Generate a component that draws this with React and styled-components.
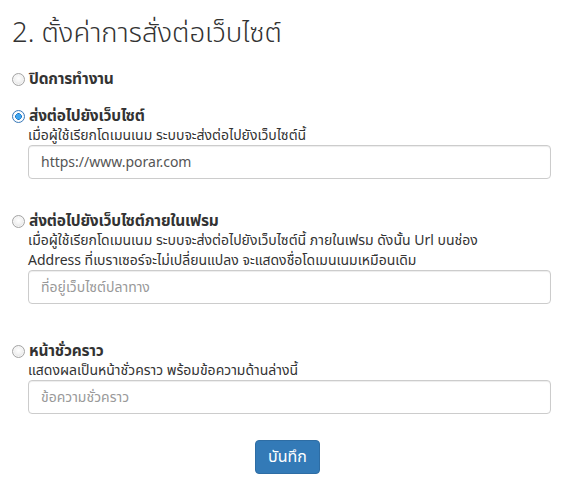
import React, { useState } from "react";
import styled, { createGlobalStyle } from "styled-components";

const Global = createGlobalStyle`
  body {
    margin: 0;
    background: #fff;
    font-family: "Noto Sans", "Noto Sans Thai", Tahoma, sans-serif;
    color: #333;
    font-size: 14px;
  }
`;

const Page = styled.div`
  padding: 14px 35px 0 12px;
`;

const Heading = styled.h2`
  margin: 0 0 18px;
  font-size: 27.5px;
  font-weight: 300;
  line-height: 1.3;
`;

const Option = styled.div`
  display: flex;
  align-items: flex-start;
  margin-bottom: ${({ $gap }) => $gap}px;
`;

const Radio = styled.input.attrs({ type: "radio" })`
  appearance: none;
  box-sizing: border-box;
  margin: 5px 4px 0 0;
  width: 13px;
  height: 13px;
  flex: none;
  border-radius: 50%;
  border: 1px solid #a4a4a4;
  background: radial-gradient(circle at 50% 40%, #ffffff 0%, #f2f2f2 45%, #d4d4d4 100%);
  box-shadow: inset 0 0 0 1px #f6f6f6;
  &:checked {
    border-color: #3a79b8;
    background: radial-gradient(circle, #3fa6f0 0 2.5px, #1670c2 3px, #ffffff 3.6px, #e4eef8 100%);
    box-shadow: none;
  }
`;

const Body = styled.div`
  flex: 1;
`;

const Label = styled.label`
  display: block;
  font-weight: 700;
  font-size: 15.5px;
  line-height: 20px;
  letter-spacing: -0.2px;
`;

const Help = styled.div`
  font-size: 14px;
  line-height: 20px;
  margin-left: -1px;
`;

const Field = styled.input`
  display: block;
  box-sizing: border-box;
  width: calc(100% + 1px);
  margin: 0 0 0 -1px;
  height: 34px;
  padding: 6px 12px;
  font: inherit;
  font-size: 14px;
  color: #555;
  border: 1px solid #ccc;
  border-radius: 4px;
  box-shadow: inset 0 1px 1px rgba(0, 0, 0, 0.075);
  &::placeholder {
    color: #999;
  }
`;

const Actions = styled.div`
  display: flex;
  justify-content: center;
  padding-left: 12px;
`;

const Button = styled.button`
  font: inherit;
  font-size: 16px;
  color: #fff;
  background: #337ab7;
  border: 1px solid #2e6da4;
  border-radius: 4px;
  padding: 4px 10px;
  height: 34px;
  width: 65px;
`;

export default function App() {
  const [mode, setMode] = useState("redirect");
  return (
    <Page>
      <Global />
      <Heading>2. ตั้งค่าการสั่งต่อเว็บไซต์</Heading>
      <Option $gap={17}>
        <Radio name="m" checked={mode === "off"} onChange={() => setMode("off")} />
        <Body>
          <Label>ปิดการทำงาน</Label>
        </Body>
      </Option>
      <Option $gap={31}>
        <Radio name="m" checked={mode === "redirect"} onChange={() => setMode("redirect")} />
        <Body>
          <Label>ส่งต่อไปยังเว็บไซต์</Label>
          <Help>เมื่อผู้ใช้เรียกโดเมนเนม ระบบจะส่งต่อไปยังเว็บไซต์นี้</Help>
          <Field defaultValue="https://www.porar.com" />
        </Body>
      </Option>
      <Option $gap={36}>
        <Radio name="m" checked={mode === "frame"} onChange={() => setMode("frame")} />
        <Body>
          <Label>ส่งต่อไปยังเว็บไซต์ภายในเฟรม</Label>
          <Help>
            เมื่อผู้ใช้เรียกโดเมนเนม ระบบจะส่งต่อไปยังเว็บไซต์นี้ ภายในเฟรม ดังนั้น Url บนช่อง
            <br />
            Address ที่เบราเซอร์จะไม่เปลี่ยนแปลง จะแสดงชื่อโดเมนเนมเหมือนเดิม
          </Help>
          <Field placeholder="ที่อยู่เว็บไซต์ปลาทาง" />
        </Body>
      </Option>
      <Option $gap={26}>
        <Radio name="m" checked={mode === "temp"} onChange={() => setMode("temp")} />
        <Body>
          <Label>หน้าชั่วคราว</Label>
          <Help>แสดงผลเป็นหน้าชั่วคราว พร้อมข้อความด้านล่างนี้</Help>
          <Field placeholder="ข้อความชั่วคราว" />
        </Body>
      </Option>
      <Actions>
        <Button>บันทึก</Button>
      </Actions>
    </Page>
  );
}
